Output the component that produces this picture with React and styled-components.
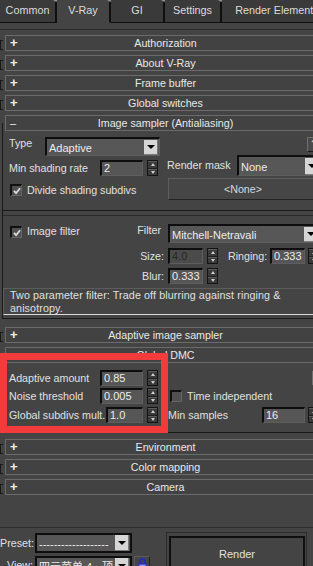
import React from 'react';
import styled, { createGlobalStyle } from 'styled-components';

const GlobalStyle = createGlobalStyle`
  html, body { margin: 0; padding: 0; background: #444444; }
  body { overflow: hidden; font-family: "Liberation Sans", Arial, sans-serif; color: #dedede; }
  #root { width: 313px; height: 566px; }
`;

const Root = styled.div`
  position: relative;
  width: 313px;
  height: 566px;
  overflow: hidden;
  background: #444444;
  display: flex;
  flex-direction: column;
  font-size: 10.7px;
`;

/* ---------- tabs ---------- */
const TabBar = styled.div`
  display: flex;
  flex-shrink: 0;
  height: 23px;
  width: 360px;
`;

const Tab = styled.div`
  position: relative;
  box-sizing: border-box;
  flex-shrink: 0;
  width: ${p => p.$w}px;
  height: 23px;
  padding-bottom: 2px;
  background: ${p => (p.$active ? '#444444' : '#3a3a3a')};
  border-right: 2px solid #0f0f0f;
  border-bottom: 1px solid ${p => (p.$active ? '#444444' : '#0f0f0f')};
  display: flex;
  align-items: center;
  justify-content: center;
  font-size: 10.8px;
  color: #dcdcdc;
  white-space: nowrap;
  &::after {
    content: '';
    position: absolute;
    top: 0;
    right: -4px;
    border-left: 3px solid transparent;
    border-right: 3px solid transparent;
    border-top: 2px solid #8c8c8c;
  }
`;

/* ---------- rollout panel ---------- */
const Panel = styled.div`
  flex: 1;
  width: 326px;
  margin-top: 6px;
  border-top: 1px solid #2c2c2c;
  padding-top: 5px;
  display: flex;
  flex-direction: column;
  overflow: hidden;
`;

const RollRow = styled.div`
  display: flex;
  align-items: flex-end;
  flex-shrink: 0;
  height: 16px;
  margin-top: ${p => (p.$mt === undefined ? 4 : p.$mt)}px;
`;

const Bracket = styled.div`
  box-sizing: border-box;
  flex-shrink: 0;
  width: 3px;
  height: 10px;
  margin-right: 2px;
  margin-bottom: 1px;
  border: 1px solid #1a1a1a;
  border-right: none;
  visibility: ${p => (p.$hidden ? 'hidden' : 'visible')};
`;

const Bar = styled.div`
  flex: 1;
  box-sizing: border-box;
  height: 16px;
  border: 1px solid #6b6b6b;
  background: #424242;
  display: flex;
  align-items: center;
  padding: 0 4px;
  color: #e8e8e8;
`;

const Sign = styled.span`
  width: 8px;
  flex-shrink: 0;
  font-weight: ${p => (p.$open ? 'normal' : 'bold')};
  font-size: ${p => (p.$open ? '11px' : '13px')};
  line-height: 14px;
  color: #f0f0f0;
`;

const BarTitle = styled.span`
  flex: 1;
  margin-right: 8px;
  text-align: center;
  white-space: nowrap;
  line-height: 14px;
`;

const Frame = styled.div`
  flex-shrink: 0;
  margin-left: 2px;
  margin-top: -8px;
  padding-top: ${p => p.$pt}px;
  padding-bottom: ${p => p.$pb || 0}px;
  border-left: 1px solid #1a1a1a;
  border-bottom: 1px solid #1a1a1a;
  display: flex;
  flex-direction: column;
`;

const Group = styled.div`
  position: relative;
  flex-shrink: 0;
  display: flex;
  flex-direction: column;
  margin-top: ${p => p.$mt || 0}px;
`;

/* ---------- controls ---------- */
const Label = styled.span`
  flex-shrink: 0;
  white-space: nowrap;
  line-height: 13px;
  color: #e0e0e0;
  width: ${p => (p.$w ? `${p.$w}px` : 'auto')};
  text-align: ${p => (p.$right ? 'right' : 'left')};
  margin-left: ${p => p.$ml || 0}px;
  margin-top: ${p => p.$mt || 0}px;
`;

const PushLabel = styled(Label)`
  margin-left: auto;
  margin-right: 3px;
`;

const Select = styled.div`
  box-sizing: border-box;
  flex-shrink: 0;
  width: ${p => p.$w}px;
  height: ${p => p.$h}px;
  margin-left: ${p => p.$ml || 0}px;
  border-top: 2px solid #0e0e0e;
  border-left: 2px solid #0e0e0e;
  border-right: ${p => (p.$heavy ? '2px solid #0e0e0e' : '1px solid #5e5e5e')};
  border-bottom: ${p => (p.$heavy ? '2px solid #0e0e0e' : '1px solid #5e5e5e')};
  background: #575757;
  display: flex;
  align-items: center;
  padding-left: 2px;
  padding-right: 1px;
`;

const SelectText = styled.span`
  flex: 1;
  overflow: hidden;
  white-space: nowrap;
  font-size: 11px;
  line-height: 13px;
  padding-top: 2px;
  color: #ececec;
  font-family: "Liberation Sans", "Noto Sans CJK SC", sans-serif;
`;

const ArrowBtn = styled.div`
  box-sizing: border-box;
  flex-shrink: 0;
  width: 14px;
  height: ${p => p.$h || 15}px;
  background: #d6d6d6;
  border-right: 1px solid #7a7a7a;
  border-bottom: 1px solid #7a7a7a;
  display: flex;
  align-items: center;
  justify-content: center;
  &::after {
    content: '';
    border-left: 4px solid transparent;
    border-right: 4px solid transparent;
    border-top: 4px solid #000;
  }
`;

const Field = styled.div`
  box-sizing: border-box;
  flex-shrink: 0;
  width: ${p => p.$w}px;
  height: 16px;
  margin-left: ${p => p.$ml || 0}px;
  border-top: 2px solid #0e0e0e;
  border-left: 2px solid #0e0e0e;
  border-right: 1px solid #5e5e5e;
  border-bottom: 1px solid #5e5e5e;
  background: ${p => (p.$disabled ? '#4b4b4b' : '#565656')};
  color: ${p => (p.$disabled ? '#262626' : '#ececec')};
  padding-left: 2px;
  font-size: 11px;
  line-height: 13px;
  white-space: nowrap;
  overflow: hidden;
`;

const Spin = styled.div`
  box-sizing: border-box;
  flex-shrink: 0;
  width: 11px;
  height: 16px;
  margin-left: ${p => (p.$ml === undefined ? 4 : p.$ml)}px;
  border: 1px solid #141414;
  background: #3a3a3a;
  display: flex;
  flex-direction: column;
`;

const SpinHalf = styled.div`
  flex: 1;
  display: flex;
  align-items: center;
  justify-content: center;
  border-top: 1px solid #5c5c5c;
  border-bottom: ${p => (p.$down ? 'none' : '1px solid #1e1e1e')};
  &::after {
    content: '';
    border-left: 2.5px solid transparent;
    border-right: 2.5px solid transparent;
    ${p => (p.$down ? 'border-top' : 'border-bottom')}: 3px solid #cfcfcf;
  }
`;

const CheckBox = styled.div`
  box-sizing: border-box;
  flex-shrink: 0;
  width: 12px;
  height: 12px;
  margin-left: ${p => p.$ml || 0}px;
  margin-top: ${p => p.$mt || 0}px;
  border-top: 2px solid #111;
  border-left: 2px solid #111;
  border-right: 1px solid #666;
  border-bottom: 1px solid #666;
  background: #505050;
  display: flex;
  align-items: center;
  justify-content: center;
`;

const HelpBtn = styled.div`
  box-sizing: border-box;
  flex-shrink: 0;
  width: 14px;
  height: 15px;
  margin-left: auto;
  border-top: 1px solid #6e6e6e;
  border-left: 1px solid #6e6e6e;
  border-right: 1px solid #1a1a1a;
  border-bottom: 1px solid #1a1a1a;
  background: #494949;
  color: #dcdcdc;
  font-size: 10px;
  line-height: 13px;
  text-align: center;
`;

const WideBtn = styled.div`
  box-sizing: border-box;
  flex-shrink: 0;
  width: ${p => p.$w}px;
  height: 22px;
  margin-left: 1px;
  margin-top: 2px;
  border-top: 1px solid #5e5e5e;
  border-left: 1px solid #5e5e5e;
  border-right: 1px solid #222;
  border-bottom: 1px solid #222;
  background: #464646;
  display: flex;
  align-items: center;
  justify-content: center;
  color: #d8d8d8;
`;

/* ---------- image sampler section ---------- */
const TwoCol = styled.div`
  display: flex;
  padding-left: 6px;
  padding-bottom: 10px;
`;

const Col = styled.div`
  flex-shrink: 0;
  width: ${p => p.$w}px;
  margin-left: ${p => p.$ml || 0}px;
  display: flex;
  flex-direction: column;
`;

const Line = styled.div`
  display: flex;
  align-items: ${p => p.$align || 'center'};
  flex-shrink: 0;
  height: ${p => p.$h}px;
  margin-top: ${p => p.$mt || 0}px;
  padding-left: ${p => p.$pl || 0}px;
`;

const LeadBox = styled.div`
  flex-shrink: 0;
  width: 155px;
  display: flex;
  align-items: flex-start;
`;

const GroupSep = styled.div`
  height: 4px;
  border-top: 1px solid #1a1a1a;
  border-bottom: 1px solid #2a2a2a;
`;

const Desc = styled.div`
  box-sizing: border-box;
  height: 27px;
  margin-top: 4px;
  margin-bottom: 3px;
  border-top: 1px solid #5c5c5c;
  border-left: 1px solid #5c5c5c;
  border-bottom: 1px solid #dcdcdc;
  padding: 0 4px 0 6px;
  line-height: 13px;
  color: #e0e0e0;
  white-space: nowrap;
  letter-spacing: 0.12px;
`;

const RedMark = styled.div`
  position: absolute;
  left: 0;
  top: 6px;
  width: 168px;
  height: 80px;
  box-sizing: border-box;
  border: 7px solid #f33b3b;
  pointer-events: none;
`;

/* ---------- bottom bar ---------- */
const BottomBar = styled.div`
  flex-shrink: 0;
  height: 39px;
  box-sizing: border-box;
  border-top: 1px solid #2c2c2c;
  display: flex;
`;

const BottomLeft = styled.div`
  width: 152px;
  flex-shrink: 0;
  padding-top: 5px;
  display: flex;
  flex-direction: column;
`;

const LockBox = styled.div`
  box-sizing: border-box;
  flex-shrink: 0;
  width: 16px;
  height: 20px;
  margin-left: 2px;
  border: 1px solid #5a5a5a;
  border-right-color: #222;
  display: flex;
  justify-content: center;
  padding-top: 1px;
`;

const RenderOuter = styled.div`
  box-sizing: border-box;
  flex-shrink: 0;
  width: 141px;
  height: 40px;
  margin-left: 14px;
  margin-top: 4px;
  border: 1px solid #2c2c2c;
  padding: 3px 1px 0 2px;
`;

const RenderInner = styled.div`
  box-sizing: border-box;
  height: 36px;
  border: 2px solid #0f0f0f;
  display: flex;
  align-items: center;
  justify-content: center;
  font-size: 11px;
  color: #e2e2e2;
`;

/* ---------- pieces ---------- */
const Rollout = ({ title, mt, open, noBracket }) => (
  <RollRow $mt={mt}>
    <Bracket $hidden={open || noBracket} />
    <Bar>
      <Sign $open={open}>{open ? '–' : '+'}</Sign>
      <BarTitle>{title}</BarTitle>
    </Bar>
  </RollRow>
);

const Spinner = ({ ml }) => (
  <Spin $ml={ml}>
    <SpinHalf />
    <SpinHalf $down />
  </Spin>
);

const Tick = () => (
  <svg width="8" height="8" viewBox="0 0 8 8">
    <path d="M1 3.8 L3.1 6.2 L7 1.2" fill="none" stroke="#dcdcdc" strokeWidth="1.8" />
  </svg>
);

const Dropdown = ({ w, h, ml, text, heavy, ah }) => (
  <Select $w={w} $h={h} $ml={ml} $heavy={heavy}>
    <SelectText>{text}</SelectText>
    <ArrowBtn $h={ah} />
  </Select>
);

const Padlock = () => (
  <svg width="9" height="12" viewBox="0 0 9 12">
    <path d="M2 6 V3.5 A2.5 2.5 0 0 1 7 3.5 V6" fill="none" stroke="#1c2bd0" strokeWidth="1.3" />
    <rect x="0.8" y="6" width="7.4" height="5.4" fill="#8f98e6" stroke="#1c2bd0" strokeWidth="1.1" />
  </svg>
);

export default function App() {
  return (
    <Root>
      <GlobalStyle />
      <TabBar>
        <Tab $w={57}>Common</Tab>
        <Tab $w={54} $active>V-Ray</Tab>
        <Tab $w={54}>GI</Tab>
        <Tab $w={57}>Settings</Tab>
        <Tab $w={112}>Render Elements</Tab>
      </TabBar>

      <Panel>
        <Rollout title="Authorization" mt={0} />
        <Rollout title="About V-Ray" />
        <Rollout title="Frame buffer" />
        <Rollout title="Global switches" />

        <Rollout title="Image sampler (Antialiasing)" open />
        <Frame $pt={14}>
          <TwoCol>
            <Col $w={151}>
              <Line $h={19} $align="flex-start">
                <Label $w={36}>Type</Label>
                <Dropdown w={115} h={19} text="Adaptive" />
              </Line>
              <Line $h={16} $mt={4}>
                <Label $w={91}>Min shading rate</Label>
                <Field $w={43}>2</Field>
                <Spinner />
              </Line>
              <Line $h={12} $mt={8} $pl={1}>
                <CheckBox>
                  <Tick />
                </CheckBox>
                <Label $ml={5}>Divide shading subdivs</Label>
              </Line>
            </Col>
            <Col $w={154} $ml={7}>
              <Line $h={15}>
                <HelpBtn>?</HelpBtn>
              </Line>
              <Line $h={21} $mt={3}>
                <Label $w={70}>Render mask</Label>
                <Dropdown w={84} h={21} text="None" ah={17} />
              </Line>
              <WideBtn $w={150}>&lt;None&gt;</WideBtn>
            </Col>
          </TwoCol>

          <GroupSep />

          <Line $h={19} $mt={8} $pl={6} $align="flex-start">
            <LeadBox>
              <CheckBox $ml={1} $mt={2}>
                <Tick />
              </CheckBox>
              <Label $ml={5} $mt={1}>Image filter</Label>
              <PushLabel $mt={0}>Filter</PushLabel>
            </LeadBox>
            <Dropdown w={152} h={19} ml={4} text="Mitchell-Netravali" />
          </Line>
          <Line $h={16} $mt={5} $pl={6}>
            <Label $w={155} $right>Size:</Label>
            <Field $w={35} $ml={4} $disabled>4.0</Field>
            <Spinner />
            <Label $w={42} $ml={10}>Ringing:</Label>
            <Field $w={35}>0.333</Field>
            <Spinner ml={3} />
          </Line>
          <Line $h={16} $mt={4} $pl={6}>
            <Label $w={155} $right>Blur:</Label>
            <Field $w={35} $ml={4}>0.333</Field>
            <Spinner />
          </Line>
          <Desc>
            Two parameter filter: Trade off blurring against ringing &amp;
            <br />
            anisotropy.
          </Desc>
        </Frame>

        <Rollout title="Adaptive image sampler" mt={8} />

        <Group $mt={4}>
          <Rollout title="Global DMC" mt={0} open />
          <Frame $pt={15} $pb={9}>
            <Line $h={16} $pl={6}>
              <Label $w={91}>Adaptive amount</Label>
              <Field $w={43}>0.85</Field>
              <Spinner />
              <HelpBtn>?</HelpBtn>
            </Line>
            <Line $h={16} $mt={2} $pl={6}>
              <Label $w={91}>Noise threshold</Label>
              <Field $w={43}>0.005</Field>
              <Spinner />
              <CheckBox $ml={12} />
              <Label $ml={5}>Time independent</Label>
            </Line>
            <Line $h={16} $mt={3} $pl={6}>
              <Label $w={97}>Global subdivs mult.</Label>
              <Field $w={37}>1.0</Field>
              <Spinner />
              <Label $w={94} $ml={10}>Min samples</Label>
              <Field $w={43}>16</Field>
              <Spinner ml={3} />
            </Line>
          </Frame>
          <RedMark />
        </Group>

        <Rollout title="Environment" mt={6} />
        <Rollout title="Color mapping" />
        <Rollout title="Camera" />
      </Panel>

      <BottomBar>
        <BottomLeft>
          <Line $h={20}>
            <Label $w={33} $right>Preset:</Label>
            <Dropdown w={97} h={20} ml={2} heavy text="-------------------" ah={16} />
          </Line>
          <Line $h={20} $mt={3} $align="flex-start">
            <Label $w={33} $right $mt={3}>View:</Label>
            <Dropdown w={97} h={20} ml={2} heavy text="四元菜单 4 - 顶" ah={16} />
            <LockBox>
              <Padlock />
            </LockBox>
          </Line>
        </BottomLeft>
        <RenderOuter>
          <RenderInner>Render</RenderInner>
        </RenderOuter>
      </BottomBar>
    </Root>
  );
}
